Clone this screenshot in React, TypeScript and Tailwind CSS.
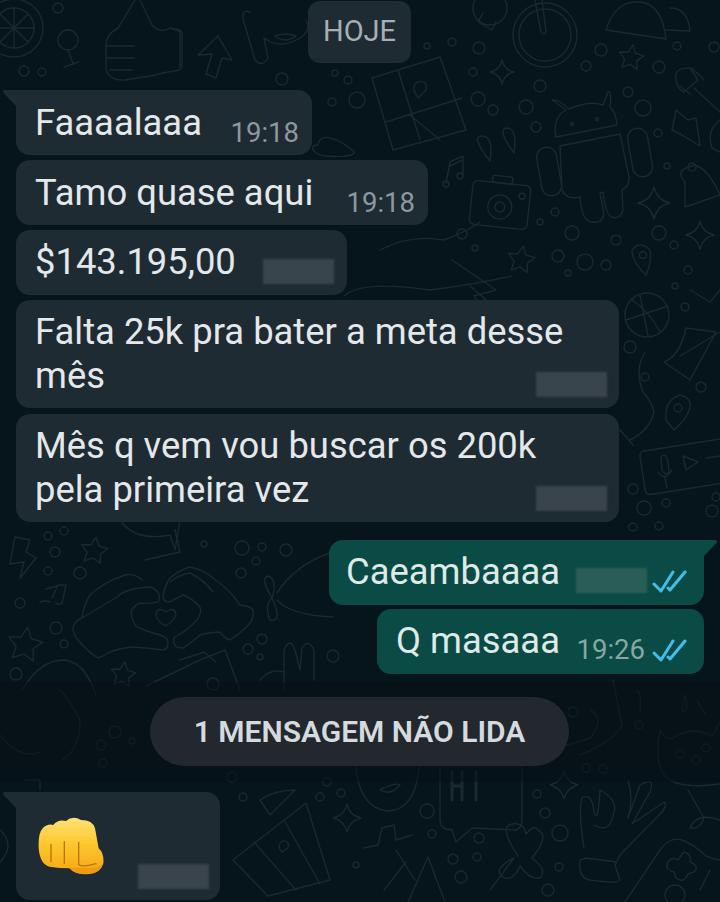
import React from 'react';

const DOTS: [number, number, number][] = [
  [452, 42, 4], [479, 48, 6], [473, 72, 4], [478, 99, 7], [493, 110, 5], [526, 107, 7], [540, 86, 6], [536, 127, 5],
  [601, 50, 6], [586, 66, 5], [659, 67, 6], [677, 46, 4], [714, 47, 5], [628, 92, 5], [643, 108, 8], [658, 133, 4],
  [667, 166, 3], [555, 212, 4], [540, 222, 3], [572, 233, 7], [616, 240, 5], [659, 233, 7], [674, 245, 4], [462, 234, 5],
  [475, 248, 3], [558, 256, 6], [585, 262, 8], [606, 265, 5], [568, 273, 3], [688, 270, 4], [675, 286, 3],
  [24, 71, 5], [42, 72, 4], [58, 8, 5], [335, 73, 3], [348, 80, 4], [282, 79, 6], [357, 100, 8], [332, 102, 4], [427, 46, 3],
  [48, 536, 4], [64, 531, 4], [55, 552, 5], [48, 571, 4], [80, 573, 6], [20, 603, 5], [56, 628, 6], [64, 644, 4], [16, 674, 6],
  [204, 544, 3], [242, 548, 7], [262, 547, 4], [286, 550, 6], [256, 561, 4], [241, 573, 5], [262, 639, 5], [248, 649, 5],
  [260, 657, 3], [333, 656, 6], [630, 347, 6], [685, 307, 4], [701, 387, 5], [633, 489, 5], [644, 508, 7], [666, 503, 4],
  [633, 527, 4], [659, 526, 4], [712, 511, 6], [716, 497, 4], [639, 725, 4], [586, 768, 4], [603, 769, 4], [545, 813, 5],
  [560, 833, 8], [559, 867, 4], [548, 890, 6], [427, 811, 7], [432, 834, 4], [479, 838, 5], [477, 857, 4], [453, 859, 5],
  [461, 877, 6], [356, 865, 3], [537, 794, 4], [320, 797, 4], [341, 793, 4], [327, 782, 4], [243, 797, 4], [232, 777, 5],
  [115, 732, 6], [101, 745, 5], [132, 741, 3], [103, 763, 4],
];

const STARS: [number, number, number][] = [
  [631, 58, 13], [521, 260, 14], [94, 551, 14], [25, 645, 18], [123, 675, 13],
];

const SPARKLES: [number, number, number][] = [
  [502, 72, 12], [654, 203, 16], [347, 818, 14], [564, 785, 14], [700, 235, 14],
];

function starPoints(cx: number, cy: number, r: number) {
  const pts: string[] = [];
  for (let i = 0; i < 10; i++) {
    const a = -Math.PI / 2 + 0.15 + (i * Math.PI) / 5;
    const d = i % 2 === 0 ? r : r * 0.5;
    pts.push(`${(cx + Math.cos(a) * d).toFixed(1)},${(cy + Math.sin(a) * d).toFixed(1)}`);
  }
  return pts.join(' ');
}

function sparklePath(x: number, y: number, r: number) {
  const k = r * 0.18;
  return `M${x} ${y - r}Q${x + k} ${y - k} ${x + r} ${y}Q${x + k} ${y + k} ${x} ${y + r}Q${x - k} ${y + k} ${x - r} ${y}Q${x - k} ${y - k} ${x} ${y - r}Z`;
}

function Doodles() {
  return (
    <svg
      className="absolute inset-0 h-[902px] w-[720px]"
      viewBox="0 0 720 902"
      fill="none"
      stroke="#1a282f"
      strokeWidth="1.4"
      strokeLinecap="round"
      strokeLinejoin="round"
    >
      {DOTS.map(([x, y, r], i) => (
        <circle key={i} cx={x} cy={y} r={r} />
      ))}
      {STARS.map(([x, y, r], i) => (
        <polygon key={i} points={starPoints(x, y, r)} />
      ))}
      {SPARKLES.map(([x, y, r], i) => (
        <path key={i} d={sparklePath(x, y, r)} />
      ))}

      {/* top left: orange slice, lollipop, thumb, arrow, face */}
      <circle cx="14" cy="28" r="29" />
      <circle cx="14" cy="28" r="20" />
      <path d="M14 8V48M-6 28H34M0 14L28 42M28 14L0 42" />
      <circle cx="68" cy="40" r="10" />
      <path d="M68 50L73 63M64 67L79 62" />
      <path d="M135 0L118 28Q106 34 106 46V70Q110 81 125 80L150 76Q166 72 180 70V30L170 28Q160 34 152 25L140 0" />
      <path d="M106 46H134M106 58H134M110 70H132M170 28L182 32V68" />
      <path d="M198 55L218 36L232 60L222 58L216 78L206 74L212 54Z" />
      <path d="M250 12Q240 8 244 22L255 60Q262 68 268 58L264 38Q280 50 300 38Q312 30 306 20" />
      <path d="M275 36Q286 44 296 36Q286 32 275 36Z" />

      {/* map */}
      <path d="M372 78L440 57L466 130L393 150Z" />
      <path d="M398 70L420 140M386 122L462 98M410 115L440 140" />
      <path d="M418 98Q410 86 418 82Q428 80 426 90Z" />
      <path d="M352 150C340 140 320 130 318 145C306 145 316 158 330 156C346 158 360 154 352 150Z" />

      {/* clock and dome */}
      <circle cx="545" cy="35" r="32" />
      <circle cx="545" cy="35" r="26" />
      <path d="M535 0L541 32Q545 36 546 31L542 0" />
      <circle cx="490" cy="8" r="17" />
      <path d="M606 30Q615 0 640 2Q662 4 666 39Z" />
      <path d="M670 8Q688 8 690 31L666 30" />
      <path d="M483 13L478 22L492 30L496 22" />

      {/* android */}
      <path d="M556 137Q552 118 566 110L552 100Q558 99 569 109Q590 100 603 105L608 92Q612 90 610 107Q616 112 617 125Z" />
      <circle cx="572" cy="124" r="1.5" />
      <circle cx="597" cy="119" r="1.5" />
      <path d="M560 146L620 134L629 177Q630 186 622 190L623 210Q620 220 612 217Q606 216 603 192L600 193L604 214Q602 224 592 222Q582 222 580 197Q566 200 562 190Z" />
      <rect x="539" y="147" width="20" height="49" rx="10" transform="rotate(-10 549 171)" />
      <rect x="630" y="128" width="20" height="49" rx="10" transform="rotate(-10 640 152)" />

      {/* quotes, note, camera */}
      <path d="M490 161Q470 136 482 136Q494 136 490 161ZM514 153Q497 130 506 128Q518 128 514 153Z" />
      <path d="M446 183L450 162L463 156V175M463 160L450 166" />
      <circle cx="446" cy="184" r="3" />
      <circle cx="460" cy="176" r="3" />
      <g transform="rotate(6 500 205)">
        <rect x="471" y="183" width="58" height="44" rx="5" />
        <rect x="490" y="176" width="20" height="7" rx="2" />
        <circle cx="500" cy="207" r="12" />
        <circle cx="500" cy="207" r="5" />
        <circle cx="521" cy="194" r="3" />
      </g>

      {/* right edge: brush, lightning, bell */}
      <path d="M676 78Q674 68 690 68L698 80L684 92Q676 88 676 78ZM694 88L720 112" />
      <path d="M692 68L704 80M690 94L680 86" />
      <path d="M676 110L688 120L696 118L700 146L682 135L672 130Z" />
      <path d="M686 168Q676 172 685 182L685 207L720 195Q708 168 694 165Z" />
      <circle cx="692" cy="167" r="4" />
      <path d="M720 120Q706 130 712 148L720 152" />

      {/* lips */}
      <path d="M380 250Q410 234 444 240Q470 230 480 222" />
      <path d="M430 290Q476 284 512 276" />
      <path d="M344 296Q362 280 430 290" />

      {/* pin, plane, basketball, feather, mic card */}
      <path d="M632 250Q640 240 650 250Q652 262 646 275Q632 262 632 250Z" />
      <circle cx="643" cy="255" r="3.5" />
      <path d="M452 260L496 290L474 296L480 306M470 286L486 300" />
      <circle cx="647" cy="315" r="22" />
      <path d="M626 320L668 306M640 295L648 336M632 300Q650 312 660 332" />
      <path d="M645 352Q634 370 643 392Q652 402 654 412Q650 430 630 440M633 445L620 430" />
      <circle cx="645" cy="377" r="4" />
      <path d="M666 420Q664 400 680 395Q692 398 690 408Q686 420 674 430Z" />
      <circle cx="678" cy="408" r="4" />
      <rect x="642" y="444" width="94" height="44" rx="5" transform="rotate(-9 690 466)" />
      <path d="M661 457Q666 452 668 462L669 472Q664 476 662 470ZM658 472Q664 482 672 470M665 478L667 488" />
      <path d="M683 456L698 462L686 470Z" />
      <path d="M706 458L720 456" />
      <path d="M686 328L716 332L690 380L664 362Q680 356 686 328Z" />
      <path d="M680 356L720 332M690 290L710 302L720 290" />

      {/* heart hands */}
      <path d="M82 618Q84 604 90 595Q104 582 125 575Q134 573 142 580M117 597Q126 588 150 587Q158 590 159 595Q160 600 158 602Q148 604 140 603Q133 606 131 612Q132 622 137 627Q148 632 160 635Q168 638 168 642Q168 650 163 650Q148 648 133 647Q120 648 110 652Q104 656 98 658Q88 652 78 640Q72 632 73 627Q76 620 82 618Z" />
      <path d="M163 598Q164 586 170 578Q180 570 190 567Q204 570 213 578Q230 590 240 605Q250 606 253 610Q254 618 250 623Q240 634 230 640Q224 638 220 632Q210 632 200 635Q190 644 183 648Q176 648 175 645Q172 640 175 637Q188 630 197 620Q202 612 200 607Q192 598 183 595Q176 598 170 602Q164 602 163 598Z" />
      <path d="M170 582Q180 574 190 573Q204 580 213 592" />
      <path d="M166 612Q158 606 156 614Q157 622 166 626Q175 620 176 614Q174 606 166 612Z" />

      {/* note, bolt, boots, bow, peace */}
      <path d="M46 589L54 587L60 585H66L62 603M52 598L58 585M40 602Q46 600 50 602M62 603Q56 606 56 602" />
      <path d="M15 537L30 540L26 552L36 558L20 578L24 562L10 564Z" />
      <path d="M120 520Q135 542 170 535L175 550L180 520M145 560L180 552L175 530" />
      <path d="M272 598Q260 578 268 576Q278 580 272 598Q264 606 270 620Q280 622 276 608L272 598Z" />
      <path d="M277 593Q295 565 330 553M277 600Q290 615 333 617" />
      <path d="M284 690V650Q290 636 295 650L300 670L302 648Q308 638 314 650V680" />
      <path d="M260 680Q270 668 284 672" />

      {/* toy, card */}
      <path d="M22 690Q40 660 64 660Q85 662 96 695" />
      <path d="M146 686L200 660L225 650L240 690" />
      <path d="M180 660L204 652L216 662" />
      <circle cx="213" cy="684" r="6" />

      {/* bottom left */}
      <path d="M25 780H40L40 790M0 735Q20 760 40 752M60 690Q70 700 80 720Q80 750 62 760" />
      <path d="M0 830Q16 845 0 862" />
      <path d="M260 800Q275 790 295 790L270 815Z" />

      {/* map, face, hi card */}
      <path d="M233 860L306 803L330 880L268 896Z" />
      <path d="M254 842L296 890M284 820L320 884" />
      <path d="M282 852Q276 846 282 841Q290 840 288 848Z" />
      <path d="M355 755Q356 808 388 811Q420 810 420 750" />
      <path d="M380 790Q390 796 400 785Q396 782 380 790Z" />
      <path d="M440 765L440 822Q442 830 452 830L456 842L472 828L516 830Q522 828 522 820V765" />
      <path d="M452 772V800M462 772V800M452 786H462M476 772V800" strokeWidth="3" />

      {/* letter, A, clover */}
      <path d="M364 848L378 845L382 828L394 825L396 840L412 835M396 850L415 880M384 890L406 862" />
      <path d="M408 902L428 857L445 902" />
      <path d="M518 856Q498 826 512 824Q524 822 526 834Q534 824 538 830Q550 836 532 858Q548 870 540 878Q530 880 520 866Q514 880 505 878Q490 870 514 858L490 890" />

      {/* right bottom: hand, cat, cross */}
      <path d="M584 848Q578 810 582 798Q592 792 594 812Q598 825 600 790Q618 800 614 812Q610 835 594 825M628 780Q634 800 628 818L640 785Q656 776 650 792L632 824L664 802Q668 804 662 812L620 855L615 865L620 880Q618 884 590 880Q578 878 580 860L586 858L616 862" />
      <path d="M660 730Q668 744 676 736Q694 726 712 736L720 722M660 730Q654 760 664 775Q676 790 720 784M688 790L704 818Q700 830 690 828Q696 812 720 820" />
      <circle cx="680" cy="754" r="4" />
      <circle cx="696" cy="760" r="4" />
      <circle cx="706" cy="748" r="4" />
      <path d="M668 862Q672 856 678 860L684 852Q692 854 690 862Q700 866 694 872L688 874Q684 884 676 878L674 872Q664 870 668 862Z" />
      <path d="M700 890L710 870" />
      <path d="M625 902L660 850Q670 836 682 840Q696 846 706 856Q716 860 720 860" />
      <circle cx="675" cy="895" r="10" />

      {/* band top */}
      <path d="M613 680L622 725Q616 740 580 755" />
      <path d="M590 710Q606 718 590 738Q570 745 566 745" />
      <circle cx="573" cy="712" r="5" />
      <path d="M636 690Q642 690 640 712M685 695Q690 712 682 712Z" />
      <path d="M697 700Q708 720 705 712" />
    </svg>
  );
}

function Blur({ className }: { className?: string }) {
  return <div className={`h-[25px] shrink-0 bg-[#3a444b] blur-[1px] ${className ?? 'w-[71px]'}`} />;
}

function Time({ children }: { children: string }) {
  return <span className="mr-px text-[27.5px] leading-[32px] text-[#8d989f]">{children}</span>;
}

function Ticks() {
  return (
    <svg className="h-[24px] w-[36px] shrink-0" viewBox="0 0 36 24" fill="none" stroke="#45bdeb" strokeWidth="3" strokeLinecap="round" strokeLinejoin="round">
      <path d="M3 15L10 22L22 3M17 19L19 21L34 3" />
    </svg>
  );
}

function TailLeft() {
  return (
    <svg className="absolute left-[-14px] top-0 h-[18px] w-[16px]" viewBox="0 0 16 18" fill="#1f2b33">
      <path d="M16 0H3Q0 0 1.5 3L16 18Z" />
    </svg>
  );
}

function TailRight() {
  return (
    <svg className="absolute right-[-14px] top-0 h-[18px] w-[16px]" viewBox="0 0 16 18" fill="#0a4c45">
      <path d="M0 0H13Q16 0 14.5 3L0 18Z" />
    </svg>
  );
}

function Incoming({ width, tail, children }: { width: string; tail?: boolean; children: React.ReactNode }) {
  return (
    <div className={`relative ml-4 rounded-[14px] bg-[#1f2b33] pl-[20px] pr-[12px] text-[36.4px] leading-[44px] text-[#e4e8ea] ${width} ${tail ? 'rounded-tl-none' : ''}`}>
      {tail && <TailLeft />}
      {children}
    </div>
  );
}

function FistEmoji() {
  return (
    <svg className="h-[80px] w-[90px] blur-[0.5px]" viewBox="0 0 270 240">
      <defs>
        <linearGradient id="fist" x1="0" y1="0" x2="0" y2="1">
          <stop offset="0" stopColor="#ffe27a" />
          <stop offset="0.45" stopColor="#fdc92e" />
          <stop offset="1" stopColor="#f6a513" />
        </linearGradient>
      </defs>
      <path
        d="M38 130Q36 85 50 70Q65 55 82 60Q95 42 120 48Q140 30 165 45Q200 45 207 70L218 130Q235 145 232 175Q222 205 190 207Q150 212 130 190Q100 190 70 185Q42 178 38 130Z"
        fill="url(#fist)"
      />
      <path d="M130 188Q150 210 190 207Q222 205 232 175Q222 190 190 188Q160 190 130 188Z" fill="#ee9a14" />
      <path d="M75 118V170M115 110V175M158 112V178Q165 188 210 176" fill="none" stroke="#b9740e" strokeWidth="4" strokeLinecap="round" />
    </svg>
  );
}

export default function App() {
  return (
    <div className="relative h-[902px] w-[720px] overflow-hidden bg-[#06141c] font-['Roboto',sans-serif]">
      <Doodles />
      <div className="relative flex flex-col">
        {/* date chip */}
        <div className="ml-[-1px] mt-px flex h-[62px] w-[103px] items-center justify-center self-center rounded-[12px] bg-[#1f2b33] text-[29px] text-[#a6afb4]">
          HOJE
        </div>

        <div className="mt-[27px] flex flex-col gap-[5px]">
          <Incoming width="w-[296px]" tail>
            <div className="flex h-[65px] items-start justify-between pt-[11px]">
              <span className="ml-[-1px]">Faaaalaaa</span>
              <span className="mt-[7px]"><Time>19:18</Time></span>
            </div>
          </Incoming>
          <Incoming width="w-[412px]">
            <div className="flex h-[65px] items-start justify-between pt-[11px]">
              <span className="ml-[-1px]">Tamo quase aqui</span>
              <span className="mt-[7px]"><Time>19:18</Time></span>
            </div>
          </Incoming>
          <Incoming width="w-[331px]">
            <div className="flex h-[65px] items-start justify-between pt-[10px]">
              <span className="ml-[-1px]">$143.195,00</span>
              <Blur className="mr-px mt-[19px] w-[71px]" />
            </div>
          </Incoming>
          <Incoming width="w-[603px]">
            <div className="h-[108px] pt-[10px]">
              <div className="ml-[-1px]">Falta 25k pra bater a meta desse</div>
              <div className="flex items-start justify-between">
                <span className="ml-[-1px]">mês</span>
                <Blur className="mt-[18px] w-[71px]" />
              </div>
            </div>
          </Incoming>
          <div className="mt-px">
            <Incoming width="w-[603px]">
              <div className="h-[108px] pt-[10px]">
                <div className="ml-[-1px]">Mês q vem vou buscar os 200k</div>
                <div className="flex items-start justify-between">
                  <span className="ml-[-1px]">pela primeira vez</span>
                  <Blur className="mt-[18px] w-[71px]" />
                </div>
              </div>
            </Incoming>
          </div>
        </div>

        <div className="mr-4 mt-[18px] flex flex-col items-end gap-1">
          <div className="relative flex h-[65px] w-[375px] items-start justify-between rounded-[14px] rounded-tr-none bg-[#0a4c45] pl-[17px] pr-[17px] pt-[10px] text-[36.4px] leading-[44px] text-[#dfe9e7]">
            <TailRight />
            <span>Caeambaaaa</span>
            <div className="mt-[18px] flex items-center gap-[4px]">
              <div className="h-[25px] w-[71px] bg-[#2b5d57] blur-[1px]" />
              <Ticks />
            </div>
          </div>
          <div className="flex h-[65px] w-[327px] items-start justify-between rounded-[14px] bg-[#0a4c45] pl-[19px] pr-[17px] pt-[10px] text-[36.4px] leading-[44px] text-[#dfe9e7]">
            <span>Q masaaa</span>
            <div className="mt-[15px] flex items-center gap-[6px]">
              <span className="text-[27.5px] leading-[32px] text-[#86a8a2]">19:26</span>
              <Ticks />
            </div>
          </div>
        </div>

        {/* unread band */}
        <div className="mt-[8px] flex h-[100px] w-full items-start justify-center bg-[#050e14]/50 pt-[15px]">
          <div className="ml-[-1px] flex h-[69px] w-[419px] items-center justify-center rounded-full bg-[#22282e] text-[30px] font-semibold text-[#d5dade]">
            1 MENSAGEM NÃO LIDA
          </div>
        </div>

        <div className="relative ml-4 mt-[10px] flex h-[108px] w-[204px] items-start justify-between rounded-[14px] rounded-tl-none bg-[#1f2b33] pl-[10px] pr-[11px]">
          <TailLeft />
          <div className="mt-[13px]">
            <FistEmoji />
          </div>
          <Blur className="mt-[72px] w-[71px]" />
        </div>
      </div>
    </div>
  );
}
